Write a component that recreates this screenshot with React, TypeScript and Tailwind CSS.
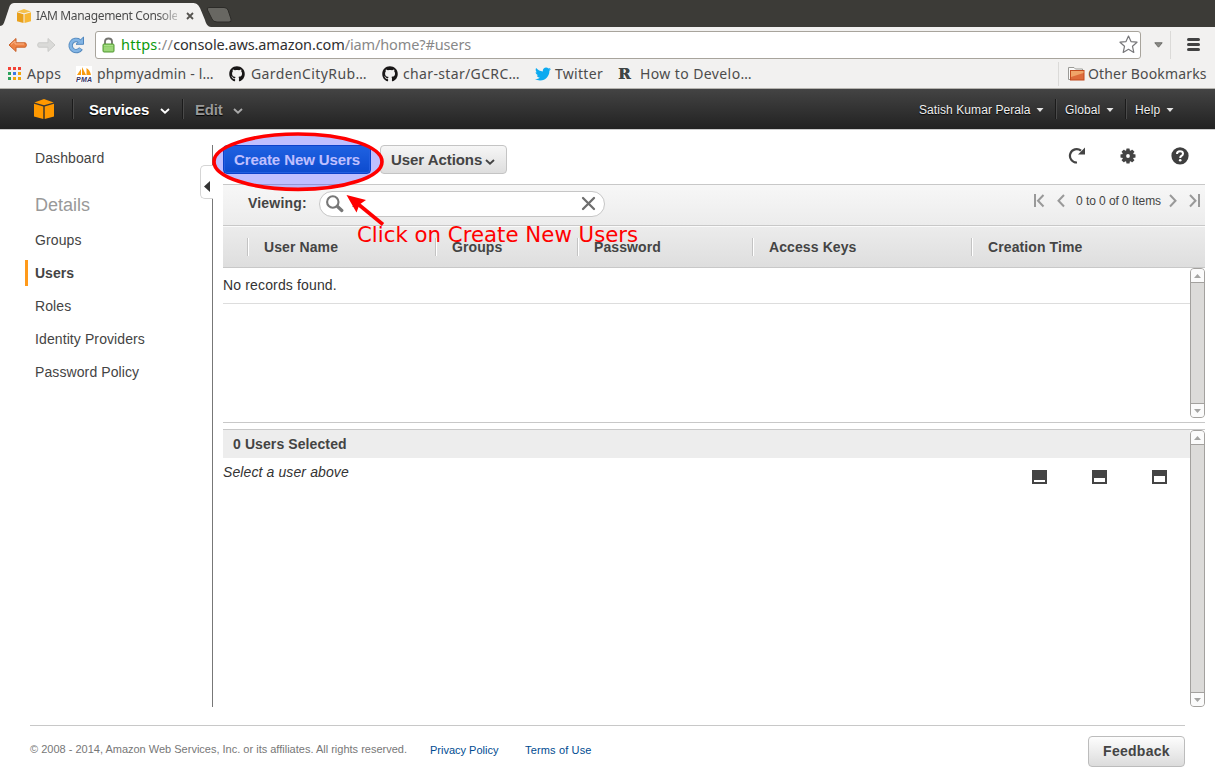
import React from 'react';
import { FaGithub, FaTwitter } from 'react-icons/fa';

const ui = "font-['Noto_Sans','Open_Sans',sans-serif]";

function Cube({ className, top, left, right }: { className: string; top: string; left: string; right: string }) {
  return (
    <svg className={className} viewBox="0 0 20 20">
      <path d="M0.3 3.600 L10 0 L19.7 3.600 L10 6.200Z" fill={top} />
      <path d="M0 4.800 L9.3 7.400 V20 L0 17.400Z" fill={left} />
      <path d="M20 4.800 L10.7 7.400 V20 L20 17.400Z" fill={right} />
    </svg>
  );
}

function TabStrip() {
  return (
    <div className="relative flex h-[27px] bg-[#3c3b37]">
      <svg className="absolute left-0 top-0 h-[27px] w-[240px]" viewBox="0 0 240 27">
        <path d="M0 27 V26 C3 26 4 23 5 20 L9 8 C10 4 12 3 15 3 H192 C196 3 198 4 200 8 L205 20 C206 24 208 27 211 27Z" fill="#f2f1f0" />
        <path d="M209 7.500 H224 Q227 7.500 228 10 L231 19 Q232 22 229 22 H217 Q213 22 212 19 L207.500 10 Q206.500 7.500 209 7.500Z" fill="#686762" stroke="#2c2b28" />
      </svg>
      <div className="relative flex h-[27px] w-[200px] items-start pl-[17px]">
        <Cube className="mt-[9px] h-[14px] w-[14px] shrink-0" top="#f5c04a" left="#e8a01c" right="#f7b733" />
        <span className={`ml-[5px] mt-[6px] w-[141px] overflow-hidden whitespace-nowrap text-[12px] leading-[19px] tracking-[-0.350px] text-[#4c4c4c] ${ui}`}
          style={{ maskImage: 'linear-gradient(to right, #000 86%, rgba(0,0,0,0.3) 100%)' }}>
          IAM Management Console
        </span>
        <svg className="ml-[9px] mt-[12px] h-[8px] w-[8px] shrink-0" viewBox="0 0 8 8">
          <path d="M1 1 L7 7 M7 1 L1 7" stroke="#55534f" strokeWidth="1.800" />
        </svg>
      </div>
    </div>
  );
}

function AddressRow() {
  return (
    <div className="flex h-[34px] items-center bg-[#f2f1f0] pt-[1px]">
      <svg className="ml-[8px] h-[16px] w-[19px]" viewBox="0 0 19 16">
        <path d="M1 8 L8 1.500 V5.800 H17 Q18.300 5.800 18.300 8 Q18.300 10.200 17 10.200 H8 V14.500Z" fill="#ee8344" stroke="#c9612a" />
        <path d="M3 7.500 L7 4 V7 H16" fill="none" stroke="#f9b489" />
      </svg>
      <svg className="ml-[10px] h-[16px] w-[19px]" viewBox="0 0 19 16">
        <path d="M18 8 L11 1.500 V5.800 H2 Q.7 5.800 .7 8 Q.7 10.200 2 10.200 H11 V14.500Z" fill="#dadad8" stroke="#cbcbc9" />
      </svg>
      <svg className="ml-[11px] h-[18px] w-[18px]" viewBox="0 0 18 18">
        <path d="M12.500 5 A5.600 5.600 0 1 0 14 12.500" fill="none" stroke="#5489bd" strokeWidth="4.400" />
        <path d="M16.500 1 V8.300 H9Z" fill="#82b4e4" stroke="#4f86bd" />
        <path d="M12.800 5.200 A5.600 5.600 0 1 0 13.600 12.900" fill="none" stroke="#82b4e4" strokeWidth="2.600" />
      </svg>
      <div className="ml-[10px] flex h-[28px] w-[1046px] items-center rounded-[3px] border border-[#a8a49c] bg-white">
        <svg className="ml-[6px] h-[16px] w-[13px]" viewBox="0 0 13 16">
          <path d="M3 8 V4.500 Q3 1.500 6.500 1.500 Q10 1.500 10 4.500 V8" fill="none" stroke="#74746f" strokeWidth="1.800" />
          <rect x="1" y="7" width="11" height="8" rx="1" fill="#8fd06b" stroke="#559a37" />
          <path d="M2 8.500 H11 M2 11 H11 M2 13 H11" stroke="#b4e597" strokeWidth=".7" />
        </svg>
        <span className={`mb-[2px] ml-[6px] whitespace-nowrap text-[14.500px] leading-[20px] tracking-[-0.120px] text-[#888] ${ui}`}>
          <span className="tracking-[0.250px] text-[#0c9a0c]">https</span><span className="tracking-[0.300px]">://</span><span className="text-[#303030]">console.aws.amazon.com</span>/iam/home?#users
        </span>
        <svg className="ml-auto mr-[2px] h-[19px] w-[19px]" viewBox="0 0 19 19">
          <path d="M9.500 1 L12 6.600 L18 7.200 L13.500 11.300 L14.800 17.400 L9.500 14.300 L4.200 17.400 L5.500 11.300 L1 7.200 L7 6.600Z" fill="#fff" stroke="#77777a" strokeWidth="1.200" strokeLinejoin="round" />
        </svg>
      </div>
      <svg className="ml-[13px] h-[6px] w-[9px]" viewBox="0 0 9 6"><path d="M.8 .8 H8.200 L4.500 5.200Z" fill="#8b8b87" stroke="#6c6c68" /></svg>
      <div className="ml-[7px] h-[28px] w-px bg-[#dbdad8]" />
      <div className="ml-[16px] flex w-[13px] flex-col gap-[2px]">
        <div className="h-[3px] rounded-sm bg-[#424242]" />
        <div className="h-[3px] rounded-sm bg-[#424242]" />
        <div className="h-[3px] rounded-sm bg-[#424242]" />
      </div>
    </div>
  );
}

const appColors = ['#f44336', '#f44336', '#ef4135', '#2ba25b', '#3b78e7', '#f2a60c', '#2ba25b', '#f2a60c', '#f2a60c'];

function Bookmark({ box, text, icon, label }: { box: string; text: string; icon: React.ReactNode; label: string }) {
  return (
    <div className={`flex shrink-0 items-center ${box}`}>
      {icon}
      <span className={`whitespace-nowrap ${text}`}>{label}</span>
    </div>
  );
}

function BookmarkBar() {
  return (
    <div className={`flex h-[28px] items-center border-b border-[#b5b3ae] bg-[#f2f1f0] pb-[2px] pl-[8px] text-[14px] leading-[20px] text-[#4c4c4c] ${ui}`}>
      <Bookmark box="w-[68px]" text="ml-[6px] tracking-[0.400px]" label="Apps" icon={
        <div className="grid grid-cols-3 gap-[2px]">
          {appColors.map((c, i) => <div key={i} className="h-[3px] w-[3px]" style={{ backgroundColor: c }} />)}
        </div>
      } />
      <Bookmark box="w-[153px]" text="ml-[5px] tracking-[0.150px]" label="phpmyadmin - l…" icon={
        <svg className="h-[16px] w-[16px]" viewBox="0 0 16 16">
          <rect width="16" height="16" fill="#fff" />
          <path d="M1 9 L5 3 V9Z M6 9 V1 L10 9Z M10.500 9 V2 Q14 4 15 9Z" fill="#f89c0e" />
          <text x="0" y="15.800" fontSize="7" fontWeight="bold" fontStyle="italic" fontFamily="Liberation Sans" fill="#333366" textLength="16">PMA</text>
        </svg>
      } />
      <Bookmark box="w-[153px]" text="ml-[6px] tracking-[0.400px]" label="GardenCityRub…" icon={<FaGithub className="h-[16px] w-[16px] text-[#181616]" />} />
      <Bookmark box="w-[153px]" text="ml-[5px] tracking-[0.350px]" label="char-star/GCRC…" icon={<FaGithub className="h-[16px] w-[16px] text-[#181616]" />} />
      <Bookmark box="w-[82px]" text="ml-[4px] tracking-[0.300px]" label="Twitter" icon={<FaTwitter className="h-[16px] w-[16px] text-[#0caaf0]" />} />
      <Bookmark box="w-[140px]" text="ml-[8px] tracking-[0.400px]" label="How to Develo…" icon={
        <span className="ml-[1px] w-[14px] font-['DejaVu_Serif',serif] text-[15px] font-bold text-[#3f4444] [text-shadow:0.4px_0_0_#3f4444]">R</span>
      } />
      <div className="ml-auto h-[24px] w-px bg-[#dbdad8]" />
      <Bookmark box="w-[147px] ml-[9px]" text="ml-[3px] tracking-[0.150px]" label="Other Bookmarks" icon={
        <svg className="h-[16px] w-[17px]" viewBox="0 0 17 16">
          <path d="M.5 13.500 V1.500 H6 L7.500 3 H14.500 V6 H3 V13.500Z" fill="#fafafa" stroke="#9a9a96" />
          <rect x="2.500" y="4.500" width="13.500" height="9.500" fill="#dd6b3a" stroke="#c24a1c" />
          <path d="M3 5 H15.500 V7 L3 11Z" fill="#f0a468" />
        </svg>
      } />
    </div>
  );
}

function Chevron({ color, className }: { color: string; className: string }) {
  return (
    <svg className={`h-[6px] w-[10px] ${className}`} viewBox="0 0 10 6">
      <path d="M1 1 L5 4.600 L9 1" fill="none" stroke={color} strokeWidth="1.900" />
    </svg>
  );
}

function Caret({ className }: { className: string }) {
  return <svg className={`h-[4px] w-[8px] ${className}`} viewBox="0 0 8 4"><path d="M.5 0 H7.500 L4 4Z" fill="#e4e4e4" /></svg>;
}

function NavLine({ className }: { className: string }) {
  return <div className={`h-[20px] w-[2px] border-l border-[#1b1b1b] bg-[#4a4a4a] ${className}`} />;
}

function NavBar() {
  return (
    <div className="relative flex h-[40px] items-center bg-linear-to-b from-[#444] to-[#222] font-['Liberation_Sans',sans-serif] shadow-[0_1px_0_#ccc] [text-shadow:0_1px_1px_#000]">
      <Cube className="ml-[34px] h-[20px] w-[20px]" top="#ff9900" left="#ff9900" right="#ff9900" />
      <NavLine className="ml-[18px]" />
      <span className="ml-[15px] mt-[2px] w-[62px] text-[15px] font-bold tracking-[-0.200px] text-white">Services</span>
      <Chevron color="#fff" className="ml-[9px] mt-[3px]" />
      <NavLine className="ml-[12px]" />
      <span className="ml-[11px] mt-[2px] w-[29px] text-[15px] font-bold tracking-[-0.200px] text-[#999]">Edit</span>
      <Chevron color="#aaa" className="ml-[9px] mt-[3px]" />
      <div className="ml-auto flex items-center text-[12px] text-[#eee]">
        <span className="mt-[2px] w-[112px] whitespace-nowrap tracking-[0.080px]">Satish Kumar Perala</span><Caret className="ml-[5px] mt-[2px]" />
        <NavLine className="ml-[11px]" />
        <span className="ml-[8px] mt-[2px] w-[36px] tracking-[0.100px]">Global</span><Caret className="ml-[5px] mt-[2px]" />
        <NavLine className="ml-[11px]" />
        <span className="ml-[8px] mt-[2px] w-[26px] tracking-[0.200px]">Help</span><Caret className="ml-[5px] mt-[2px]" />
        <div className="w-[41px]" />
      </div>
    </div>
  );
}

const navItems = ['Groups', 'Users', 'Roles', 'Identity Providers', 'Password Policy'];

function Sidebar() {
  return (
    <div className="flex w-[200px] shrink-0 flex-col text-[14px] leading-[33px] tracking-[0.100px] text-[#444]">
      <div className="mt-[13px] pl-[35px]">Dashboard</div>
      <div className="mb-[2px] mt-[14px] pl-[35px] text-[18px] tracking-normal text-[#999]">Details</div>
      {navItems.map((n) =>
        n === 'Users' ? (
          <div key={n} className="flex h-[33px] items-center pl-[25px] font-bold tracking-normal">
            <div className="mb-[1px] mr-[7px] h-[26px] w-[3px] bg-[#ff9a1a]" />{n}
          </div>
        ) : (
          <div key={n} className="h-[33px] pl-[35px]">{n}</div>
        ),
      )}
    </div>
  );
}

function Divider() {
  return (
    <div className="flex w-[13px] shrink-0 flex-col items-end pt-[16px]">
      <div className="h-[20px] w-px bg-[#777]" />
      <div className="flex h-[34px] w-[13px] items-center rounded-l-[5px] border border-r-0 border-[#d5d5d5]">
        <svg className="ml-[3px] mt-[8px] h-[11px] w-[6px]" viewBox="0 0 6 11"><path d="M6 0 V11 L0 5.500Z" fill="#333" /></svg>
      </div>
      <div className="h-[508px] w-px bg-[#777]" />
    </div>
  );
}

function ScrollTrack({ className }: { className: string }) {
  return (
    <div className={`flex w-[15px] shrink-0 flex-col rounded-[4px] border border-[#a3a19e] bg-[#dcdbd9] ${className}`}>
      <div className="flex h-[14px] items-center justify-center rounded-t-[3px] border-b border-[#a3a19e] bg-[#fbfbfb] pt-[1px]">
        <svg className="h-[4px] w-[7px]" viewBox="0 0 7 4"><path d="M0 4 L3.500 0 L7 4Z" fill="#a5a5a3" /></svg>
      </div>
      <div className="grow" />
      <div className="flex h-[14px] items-center justify-center rounded-b-[3px] border-t border-[#a3a19e] bg-[#fbfbfb]">
        <svg className="h-[4px] w-[7px]" viewBox="0 0 7 4"><path d="M0 0 L3.500 4 L7 0Z" fill="#a5a5a3" /></svg>
      </div>
    </div>
  );
}

function Actions() {
  return (
    <div className="flex h-[55px] items-start pt-[16px]">
      <button className="h-[29px] w-[148px] whitespace-nowrap rounded-[4px] border border-[#1158b8] bg-linear-to-b from-[#2a83d8] to-[#1164be] text-[15px] font-bold leading-[26px] tracking-[-0.100px] text-white shadow-[inset_0_0_0_1px_#2f7fd6]">
        Create New Users
      </button>
      <button className="ml-[9px] flex h-[29px] w-[127px] items-center whitespace-nowrap rounded-[4px] border border-[#c4c4c4] bg-linear-to-b from-[#f6f6f6] to-[#dedede] pl-[10px] pt-[1px] text-[15px] font-bold tracking-[-0.060px] text-[#444]">
        User Actions<Chevron color="#444" className="ml-[3px] mt-[3px]" />
      </button>
      <svg className="ml-[561px] mt-[2px] h-[17px] w-[18px]" viewBox="0 0 18 17">
        <path d="M9 15.500 A6.700 6.700 0 1 1 13 3.700" fill="none" stroke="#444" strokeWidth="2.200" />
        <path d="M17 .5 V7.500 H10Z" fill="#444" />
      </svg>
      <svg className="ml-[34px] mt-[3px] h-[16px] w-[16px]" viewBox="-8 -8 16 16">
        {[0, 45, 90, 135].map((a) => <rect key={a} x="-1.700" y="-7.500" width="3.400" height="15" rx=".4" fill="#444" transform={`rotate(${a})`} />)}
        <circle r="5.900" fill="#444" /><circle r="1.900" fill="#fff" />
      </svg>
      <svg className="ml-[35px] mt-[2px] h-[18px] w-[18px]" viewBox="0 0 18 18">
        <circle cx="9" cy="8.800" r="8.600" fill="#3f3f3f" />
        <path d="M6 7 Q6 4.300 9 4.300 Q12 4.300 12 6.700 Q12 8.200 10.300 9 Q9.200 9.600 9.200 10.900" fill="none" stroke="#fff" strokeWidth="2" />
        <circle cx="9.200" cy="13.300" r="1.300" fill="#fff" />
      </svg>
    </div>
  );
}

function Pager() {
  const s = { fill: 'none', stroke: '#999', strokeWidth: 2 };
  return (
    <div className="mb-[9px] ml-auto flex items-center text-[12px] text-[#444]">
      <svg className="h-[14px] w-[12px]" viewBox="0 0 12 14"><path d="M2 0 V13 M10.500 1 L5 6.700 L10.500 12.500" {...s} /></svg>
      <svg className="ml-[12px] h-[14px] w-[8px]" viewBox="0 0 8 14"><path d="M7 1 L1.500 6.700 L7 12.500" {...s} /></svg>
      <span className="ml-[11px] w-[85px] whitespace-nowrap tracking-[-0.060px]">0 to 0 of 0 Items</span>
      <svg className="ml-[8px] h-[14px] w-[8px]" viewBox="0 0 8 14"><path d="M1 1 L6.500 6.700 L1 12.500" {...s} /></svg>
      <svg className="ml-[12px] mr-[4px] h-[14px] w-[12px]" viewBox="0 0 12 14"><path d="M10 0 V13 M1 1 L6.500 6.700 L1 12.500" {...s} /></svg>
    </div>
  );
}

function FilterBar() {
  return (
    <div className="flex h-[41px] items-center border-t border-[#c8c8c8] bg-linear-to-b from-[#f7f7f7] to-[#ececec] pl-[25px]">
      <span className="mb-[3px] w-[71px] text-[14px] font-bold tracking-[0.200px] text-[#444]">Viewing:</span>
      <div className="mb-[3px] flex h-[26px] w-[286px] items-center rounded-full border border-[#c6c6c6] bg-white">
        <svg className="ml-[6px] h-[18px] w-[18px]" viewBox="0 0 18 18">
          <circle cx="6.800" cy="7" r="5.700" fill="none" stroke="#777" strokeWidth="2.100" />
          <path d="M11.500 11.500 L15.800 15.500" stroke="#777" strokeWidth="3.200" strokeLinecap="round" />
        </svg>
        <svg className="ml-[8px] mt-[3px] h-[3px] w-[3px]" viewBox="0 0 3 3"><path d="M0 3 L3 0 V3Z" fill="#666" /></svg>
        <svg className="ml-auto mr-[8px] h-[15px] w-[15px]" viewBox="0 0 15 15">
          <path d="M2 2 L13 13 M13 2 L2 13" stroke="#6e6e6e" strokeWidth="2.300" strokeLinecap="round" />
        </svg>
      </div>
      <Pager />
    </div>
  );
}

const columns = [
  { label: 'User Name', width: 'w-[188px]' },
  { label: 'Groups', width: 'w-[142px]' },
  { label: 'Password', width: 'w-[175px]' },
  { label: 'Access Keys', width: 'w-[219px]' },
  { label: 'Creation Time', width: 'w-[234px]' },
];

function TableHead() {
  return (
    <div className="flex h-[43px] items-center border-y border-[#c8c8c8] bg-linear-to-b from-[#ececec] to-[#dedede] pl-[24px] text-[14px] font-bold tracking-[0.100px] text-[#444] shadow-[inset_0_1px_0_#fafafa]">
      {columns.map((c) => (
        <div key={c.label} className={`flex h-[18px] shrink-0 items-center border-l border-[#c3c3c3] ${c.width}`}>
          <span className="h-full w-px bg-white" /><span className="ml-[15px] mt-[2px] whitespace-nowrap">{c.label}</span>
        </div>
      ))}
    </div>
  );
}

function PanelIcon({ inner }: { inner: string }) {
  return (
    <div className="flex h-[14px] w-[15px] flex-col justify-end bg-[#444] p-[2px]">
      <div className={`bg-white ${inner}`} />
    </div>
  );
}

function Results() {
  return (
    <>
      <div className="flex h-[155px] border-b border-[#c8c8c8]">
        <div className="h-[36px] grow border-b border-[#ddd] text-[14px] leading-[35px] tracking-[0.150px] text-[#333]">No records found.</div>
        <ScrollTrack className="h-[150px]" />
      </div>
      <div className="mt-[6px] flex h-[278px] border-t border-[#c8c8c8]">
        <div className="grow">
          <div className="h-[28px] bg-[#ededed] pl-[10px] text-[14px] font-bold leading-[28px] tracking-[0.100px] text-[#444]">0 Users Selected</div>
          <div className="flex items-start justify-between pr-[23px]">
            <span className="text-[14px] italic leading-[28px] tracking-[0.110px] text-[#333]">Select a user above</span>
            <div className="mt-[12px] flex gap-[45px]">
              <PanelIcon inner="h-[2px]" /><PanelIcon inner="h-[4px]" /><PanelIcon inner="h-[6px]" />
            </div>
          </div>
        </div>
        <ScrollTrack className="h-[277px]" />
      </div>
    </>
  );
}

function Footer() {
  return (
    <div className="ml-[30px] mt-[18px] flex h-[50px] w-[1155px] items-start border-t border-[#c8c8c8] text-[11px] leading-[16px]">
      <span className="mt-[15px] w-[400px] whitespace-nowrap text-[#777]">© 2008 - 2014, Amazon Web Services, Inc. or its affiliates. All rights reserved.</span>
      <a className="mt-[16px] w-[95px] whitespace-nowrap text-[#004b91]">Privacy Policy</a>
      <a className="mt-[16px] whitespace-nowrap tracking-[0.150px] text-[#004b91]">Terms of Use</a>
      <button className="ml-auto mt-[10px] h-[31px] w-[97px] rounded-[4px] border border-[#bcbcbc] bg-linear-to-b from-[#fdfdfd] to-[#dcdcdc] pb-[2px] text-[14px] font-bold tracking-[0.280px] text-[#444]">Feedback</button>
    </div>
  );
}

function Annotation() {
  return (
    <>
      <svg className="pointer-events-none absolute left-[200px] top-[125px] h-[110px] w-[200px]" viewBox="200 125 200 110">
        <ellipse cx="298" cy="161.700" rx="84" ry="27.700" fill="rgba(0,0,255,0.25)" stroke="#f00" strokeWidth="3.600" />
        <path d="M383 224.500 L358 204" stroke="#f00" strokeWidth="3.600" />
        <path d="M346.500 195 L366 200 L359.500 204.500 L356.500 212.500Z" fill="#f00" />
      </svg>
      <div className="pointer-events-none absolute left-[357px] top-[222px] whitespace-nowrap font-['DejaVu_Sans',sans-serif] text-[21.300px] leading-[26px] text-[#f00]">
        Click on Create New Users
      </div>
    </>
  );
}

export default function App() {
  return (
    <div className="relative h-[776px] w-[1215px] overflow-hidden bg-white font-['Liberation_Sans',Arial,sans-serif]">
      <TabStrip />
      <AddressRow />
      <BookmarkBar />
      <NavBar />
      <div className="flex h-[578px]">
        <Sidebar />
        <Divider />
        <div className="ml-[10px] w-[982px]">
          <Actions />
          <FilterBar />
          <TableHead />
          <Results />
        </div>
      </div>
      <Footer />
      <Annotation />
    </div>
  );
}
